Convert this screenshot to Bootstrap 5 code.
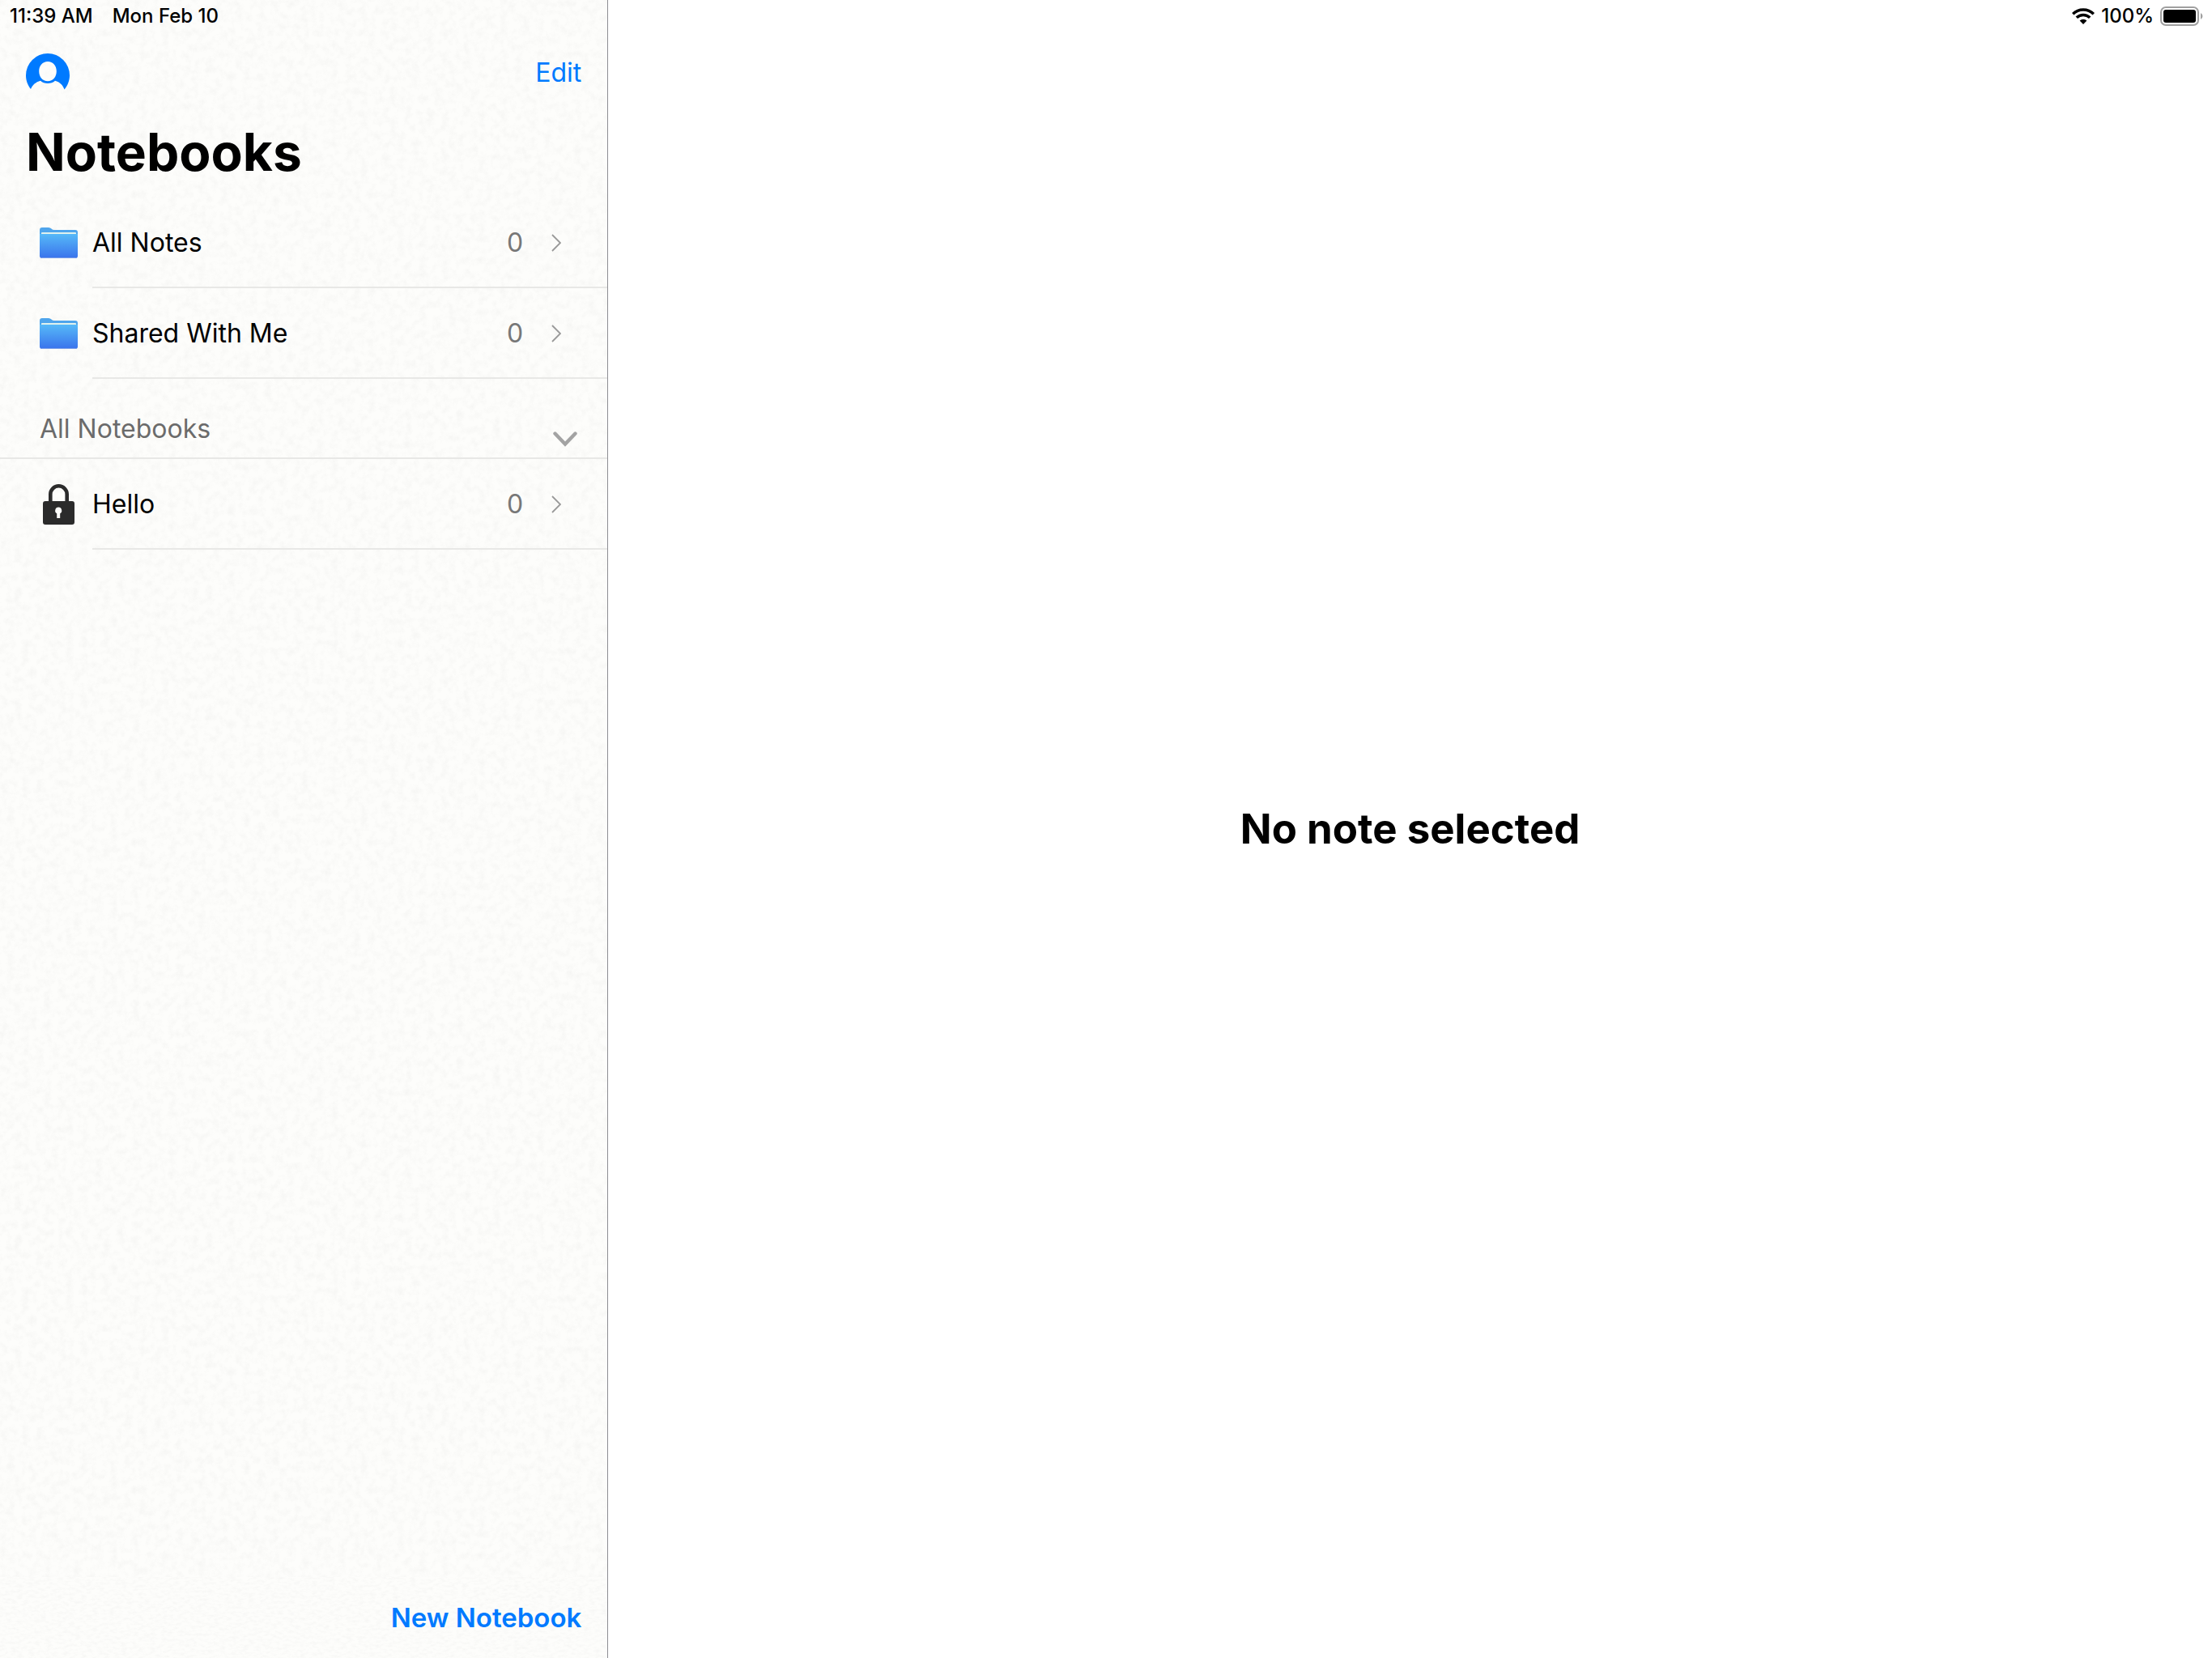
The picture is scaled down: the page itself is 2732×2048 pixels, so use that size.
<!DOCTYPE html>
<html lang="en">
<head>
<meta charset="utf-8">
<meta name="viewport" content="width=device-width, initial-scale=1">
<title>Notebooks</title>
<link href="https://cdn.jsdelivr.net/npm/bootstrap@5.3.0/dist/css/bootstrap.min.css" rel="stylesheet">
<style>
  body { font-family: Inter, "Liberation Sans", sans-serif; font-size: 32px; line-height: 44px; color: #000; background: #fff; }
  .sidebar { width: 27.5%; border-right: 1px solid #8e8e93; }
  .paper {
    background-color: #fdfdfb;
    background-image: url("data:image/svg+xml,%3Csvg xmlns='http://www.w3.org/2000/svg' width='800' height='800'%3E%3Cfilter id='p' x='0' y='0' width='100%25' height='100%25'%3E%3CfeTurbulence type='fractalNoise' baseFrequency='0.11' numOctaves='4' seed='4' stitchTiles='stitch'/%3E%3CfeColorMatrix values='0 0 0 0 0.5 0 0 0 0 0.5 0 0 0 0 0.5 0.2 0 0 0 -0.08'/%3E%3C/filter%3E%3Crect width='800' height='800' filter='url(%23p)'/%3E%3C/svg%3E");
  }
  .paper-fine {
    background-color: #fdfdfb;
    background-image: url("data:image/svg+xml,%3Csvg xmlns='http://www.w3.org/2000/svg' width='800' height='100'%3E%3Cfilter id='p' x='0' y='0' width='100%25' height='100%25'%3E%3CfeTurbulence type='fractalNoise' baseFrequency='0.14 0.3' numOctaves='3' seed='9' stitchTiles='stitch'/%3E%3CfeColorMatrix values='0 0 0 0 0.5 0 0 0 0 0.5 0 0 0 0 0.5 0.2 0 0 0 -0.08'/%3E%3C/filter%3E%3Crect width='800' height='100' filter='url(%23p)'/%3E%3C/svg%3E");
  }
  .statusbar { height: 40px; font-size: 24px; font-weight: 500; padding: 0 10px 0 12px; }
  .toolbar { height: 100px; padding: 0 32px; }
  .plain-btn { background: none; border: 0; padding: 0; color: #007aff; }
  .new-btn { font-size: 33px; }
  .page-title { font-size: 64px; line-height: 96px; font-weight: 700; padding: 0 32px; margin: 0 0 8px; }
  .note-list a { color: #000; height: 112px; padding-left: 49px; }
  .row-icon { width: 47px; margin-right: 18px; }
  .row-body { border-bottom: 2px solid #e8e8e6; padding: 2px 57px 0 0; }
  .count { color: #777; margin-right: 35px; }
  .section-head { height: 99px; padding: 0 37px 13px 49px; border-bottom: 2px solid #e8e8e6; color: #6b6b6b; }
  .empty { padding-bottom: 40px; }
  .empty h2 { font-size: 51px; line-height: 64px; font-weight: 700; }
  svg { display: block; }
</style>
<script src="https://cdn.jsdelivr.net/npm/bootstrap@5.3.0/dist/js/bootstrap.bundle.min.js"></script>
</head>
<body>
<svg width="0" height="0" class="position-absolute" aria-hidden="true">
  <defs>
    <linearGradient id="front" x1="0" y1="0" x2="0" y2="1"><stop offset="0" stop-color="#56b9f8"/><stop offset="1" stop-color="#3a73ec"/></linearGradient>
    <symbol id="folder" viewBox="0 0 47 38">
      <path d="M0 3Q0 0 3 0H11Q13 0 14.500 1.500Q16 3 18 3H44Q47 3 47 6V20H0Z" fill="#4fa5ec"/>
      <path d="M2 9V7Q2 6 3 6H44Q45 6 45 7V9Z" fill="#dff1ee"/>
      <path d="M0 8H47V35Q47 38 44 38H3Q0 38 0 35Z" fill="url(#front)"/>
      <path d="M1 37Q2 38 3 38H44Q45 38 46 37Z" fill="#7d9fe8"/>
    </symbol>
    <symbol id="next" viewBox="0 0 12 22"><path d="M1 1L11 11L1 21" fill="none" stroke="#999" stroke-width="1.800"/></symbol>
  </defs>
</svg>
<div class="d-flex vh-100">
  <aside class="sidebar paper d-flex flex-column flex-shrink-0">
    <div class="statusbar d-flex align-items-center gap-4"><span>11:39 AM</span><span>Mon Feb 10</span></div>
    <div class="toolbar d-flex align-items-center justify-content-between">
      <button type="button" class="plain-btn" aria-label="Account">
        <svg width="54" height="48" viewBox="0 0 54 48"><path fill="#007aff" fill-rule="evenodd" d="M27 0A27 27 0 0 1 54 27C54 33.500 51.500 40 47.500 44.500C45.500 39 42 35.500 36 33.800C31.500 38.200 22.500 38.200 18 33.800C12 35.500 8 39 6 44C2.300 39.500 0 33.500 0 27A27 27 0 0 1 27 0ZM27 10C20.500 10 16.200 15 16.200 22C16.200 29 20.500 34.300 27 34.300C33.500 34.300 37.800 29 37.800 22C37.800 15 33.500 10 27 10Z"/></svg>
      </button>
      <button type="button" class="plain-btn">Edit</button>
    </div>
    <h1 class="page-title">Notebooks</h1>
    <nav class="note-list d-flex flex-column" aria-label="Notes">
      <a href="#" class="d-flex align-items-stretch text-decoration-none">
        <span class="row-icon d-flex align-items-center justify-content-center"><svg width="47" height="38"><use href="#folder"/></svg></span>
        <span class="row-body d-flex flex-grow-1 align-items-center"><span class="flex-grow-1">All Notes</span><span class="count">0</span><svg width="12" height="22"><use href="#next"/></svg></span>
      </a>
      <a href="#" class="d-flex align-items-stretch text-decoration-none">
        <span class="row-icon d-flex align-items-center justify-content-center"><svg width="47" height="38"><use href="#folder"/></svg></span>
        <span class="row-body d-flex flex-grow-1 align-items-center"><span class="flex-grow-1">Shared With Me</span><span class="count">0</span><svg width="12" height="22"><use href="#next"/></svg></span>
      </a>
    </nav>
    <div class="section-head d-flex align-items-end justify-content-between">
      <span id="section-name">All Notebooks</span>
      <button type="button" class="plain-btn" aria-labelledby="section-name" aria-expanded="true">
        <svg width="30" height="19" viewBox="0 0 30 19"><path d="M2.500 2.500L15 15.500L27.500 2.500" fill="none" stroke="#a3a3a3" stroke-width="4.400" stroke-linecap="round"/></svg>
      </button>
    </div>
    <nav class="note-list d-flex flex-column" aria-label="Notebooks">
      <a href="#" class="d-flex align-items-stretch text-decoration-none">
        <span class="row-icon d-flex align-items-center justify-content-center">
          <svg width="39" height="50" viewBox="0 0 39 50"><path fill="none" stroke="#2b2b2b" stroke-width="4.600" d="M9.300 23V12.500A10.200 10.200 0 0 1 29.700 12.500V23"/><path fill="#2b2b2b" fill-rule="evenodd" d="M3 21H36Q39 21 39 24V47Q39 50 36 50H3Q0 50 0 47V24Q0 21 3 21ZM19.200 28.500A4.200 4.200 0 0 0 17.200 36.300V42H21.200V36.300A4.200 4.200 0 0 0 19.200 28.500Z"/></svg>
        </span>
        <span class="row-body d-flex flex-grow-1 align-items-center"><span class="flex-grow-1">Hello</span><span class="count">0</span><svg width="12" height="22"><use href="#next"/></svg></span>
      </a>
    </nav>
    <div class="toolbar paper-fine d-flex align-items-center justify-content-end mt-auto">
      <button type="button" class="plain-btn new-btn fw-semibold">New Notebook</button>
    </div>
  </aside>
  <main class="d-flex flex-column flex-grow-1">
    <div class="statusbar d-flex align-items-center justify-content-end gap-2">
      <svg width="28" height="20" viewBox="0 0 28 20" role="img" aria-label="Wi-Fi"><g fill="none" stroke="#000" stroke-width="3.500"><path d="M1.200 7.200A18.200 18.200 0 0 1 26.800 7.200"/><path d="M5.800 11.800A11.600 11.600 0 0 1 22.200 11.800"/></g><path d="M14 20L9.600 15.600A6.200 6.200 0 0 1 18.400 15.600Z"/></svg>
      <span>100%</span>
      <svg width="54" height="24" viewBox="0 0 54 24" role="img" aria-label="Battery full"><rect x="1" y="1" width="46" height="22" rx="6" fill="none" stroke="#a0a0a0" stroke-width="2"/><rect x="4" y="4" width="40" height="16" rx="3"/><path d="M50 8A4.500 4.500 0 0 1 50 16Z" fill="#a0a0a0"/></svg>
    </div>
    <div class="empty d-flex flex-grow-1 align-items-center justify-content-center"><h2 class="m-0">No note selected</h2></div>
  </main>
</div>
</body>
</html>
